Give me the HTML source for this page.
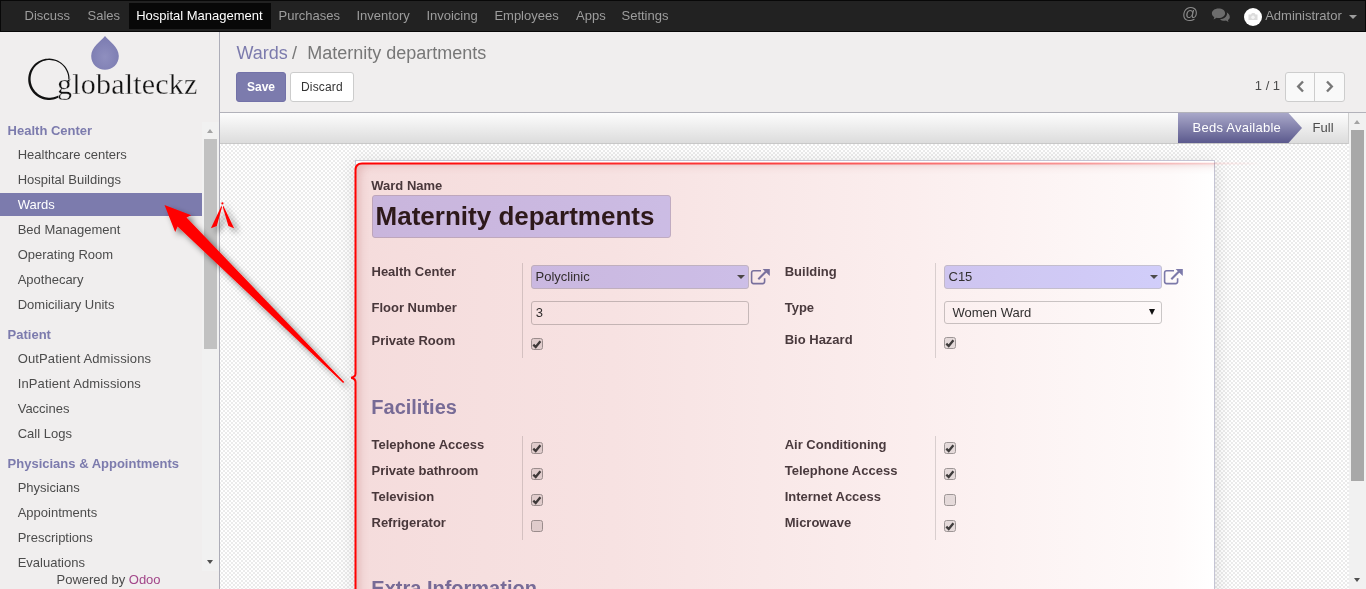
<!DOCTYPE html>
<html><head><meta charset="utf-8"><title>Odoo</title>
<style>
html,body{margin:0;padding:0;}
body{width:1366px;height:589px;overflow:hidden;position:relative;font-family:"Liberation Sans",sans-serif;background:#fff;}
.t{position:absolute;line-height:1;white-space:nowrap;}
.b{position:absolute;box-sizing:border-box;}
svg{position:absolute;overflow:visible;}
</style></head><body>

<div class="b" style="left:0px;top:0px;width:1366px;height:32px;background:#222;border:1px solid #080808;"></div>
<div class="b" style="left:129px;top:3px;width:142px;height:26px;background:#080808;"></div>
<div class="t" style="left:24.50px;top:9.00px;font-size:13px;color:#9d9d9d;">Discuss</div>
<div class="t" style="left:87.50px;top:9.00px;font-size:13px;color:#9d9d9d;">Sales</div>
<div class="t" style="left:278.50px;top:9.00px;font-size:13px;color:#9d9d9d;">Purchases</div>
<div class="t" style="left:356.40px;top:9.00px;font-size:13px;color:#9d9d9d;">Inventory</div>
<div class="t" style="left:426.40px;top:9.00px;font-size:13px;color:#9d9d9d;">Invoicing</div>
<div class="t" style="left:494.40px;top:9.00px;font-size:13px;color:#9d9d9d;">Employees</div>
<div class="t" style="left:576.00px;top:9.00px;font-size:13px;color:#9d9d9d;">Apps</div>
<div class="t" style="left:621.50px;top:9.00px;font-size:13px;color:#9d9d9d;">Settings</div>
<div class="t" style="left:136.20px;top:9.00px;font-size:13px;color:#fff;">Hospital Management</div>
<div class="t" style="left:1182.00px;top:6.46px;font-size:16px;color:#8a8a8a;">@</div>
<svg style="left:1211px;top:8px" width="20" height="14" viewBox="0 0 20 14">
<path d="M7.5 0.6C3.6 0.6 0.9 2.8 0.9 5.4c0 1.5 0.9 2.8 2.4 3.7L2.6 11.6l3.1-1.8c0.6 0.1 1.2 0.2 1.8 0.2 3.9 0 6.6-2.2 6.6-4.8S11.4 0.6 7.5 0.6z" fill="#6c6c6c"/>
<path d="M15.6 4.2c0.3 0.5 0.4 1 0.4 1.6 0 3-3.1 5.3-7 5.4 1 1 2.6 1.6 4.4 1.6 0.5 0 1-0.1 1.5-0.2l2.6 1.4-0.6-2.1c1.2-0.7 1.9-1.8 1.9-3 0-1.9-1.3-3.6-3.2-4.7z" fill="#6c6c6c"/>
</svg>
<div class="b" style="left:1244px;top:8px;width:18px;height:18px;border-radius:50%;background:#fff;"></div>
<svg style="left:1247px;top:11px" width="12" height="11" viewBox="0 0 12 11"><path d="M1.5 3.5 H4 L5 2 H7.5 L8.5 3.5 H10.5 V9 H1.5 Z" fill="#dcdcdc"/><circle cx="6" cy="6.2" r="1.7" fill="#f4f4f4"/></svg>
<div class="t" style="left:1265.20px;top:9.00px;font-size:13px;color:#9d9d9d;">Administrator</div>
<div class="b" style="left:1349px;top:15px;width:0;height:0;border-left:4px solid transparent;border-right:4px solid transparent;border-top:4px solid #9d9d9d;"></div>
<div class="b" style="left:0px;top:32px;width:220px;height:557px;background:#f0eeee;border-right:1px solid #adadb8;"></div>
<svg style="left:90px;top:35px" width="30" height="36" viewBox="0 0 30 36">
<defs><radialGradient id="dg" cx="0.5" cy="0.62" r="0.55"><stop offset="0" stop-color="#8f8fbf"/><stop offset="1" stop-color="#7d7db2"/></radialGradient></defs>
<path d="M15 1 C11 6 1.2 12 1.2 21 C1.2 29 7.5 34.8 15 34.8 C22.5 34.8 28.8 29 28.8 21 C28.8 12 19 6 15 1Z" fill="url(#dg)"/>
</svg>
<svg style="left:0;top:0" width="220" height="110" viewBox="0 0 220 110"><path d="M69.40 82.18 L69.57 80.35 L69.58 78.51 L69.43 76.67 L69.12 74.85 L68.64 73.08 L68.01 71.35 L67.23 69.68 L66.30 68.09 L65.23 66.58 L64.04 65.18 L62.72 63.89 L61.30 62.72 L59.78 61.69 L58.17 60.79 L56.49 60.04 L54.74 59.44 L52.96 59.00 L51.14 58.72 L49.30 58.60 L47.46 58.65 L45.63 58.86 L43.82 59.23 L42.06 59.76 L40.35 60.45 L38.71 61.28 L37.15 62.26 L35.68 63.37 L34.31 64.61 L33.07 65.97 L31.94 67.43 L30.96 68.98 L30.11 70.62 L29.41 72.32 L28.87 74.08 L28.48 75.88 L28.26 77.71 L28.20 79.55 L28.31 81.39 L28.57 83.21 L29.00 85.01 L29.59 86.75 L30.33 88.44 L31.21 90.05 L32.24 91.58 L33.40 93.02 L34.68 94.34 L36.07 95.54 L37.57 96.62 L39.15 97.56 L40.81 98.35 L42.54 99.00 L44.31 99.49 L46.13 99.81 L47.96 99.98 L49.80 99.98 L51.64 99.82 L53.45 99.49 L55.23 99.01 L56.95 98.37 L58.62 97.58 L58.30 95.54 L56.78 96.26 L55.21 96.85 L53.59 97.29 L51.94 97.58 L50.27 97.73 L48.59 97.73 L46.92 97.58 L45.27 97.28 L43.66 96.84 L42.08 96.25 L40.57 95.53 L39.13 94.67 L37.77 93.69 L36.50 92.60 L35.33 91.39 L34.28 90.09 L33.34 88.69 L32.54 87.22 L31.86 85.69 L31.33 84.10 L30.94 82.46 L30.70 80.80 L30.60 79.13 L30.66 77.45 L30.86 75.79 L31.21 74.15 L31.70 72.55 L32.34 70.99 L33.11 69.50 L34.01 68.09 L35.03 66.76 L36.17 65.52 L37.41 64.40 L38.75 63.38 L40.17 62.49 L41.66 61.73 L43.22 61.11 L44.83 60.63 L46.47 60.29 L48.14 60.10 L49.81 60.05 L51.49 60.16 L53.14 60.42 L54.77 60.82 L56.36 61.36 L57.89 62.05 L59.36 62.86 L60.74 63.81 L62.04 64.87 L63.24 66.04 L64.32 67.32 L65.29 68.69 L66.14 70.14 L66.85 71.66 L67.43 73.23 L67.86 74.85 L68.15 76.50 L68.29 78.18 L68.28 79.85 L68.12 81.52Z" fill="#111"/></svg>
<div class="t" style="left:57.00px;top:68.88px;font-size:30px;color:#111;font-family:'Liberation Serif',serif;letter-spacing:0.2px;-webkit-text-stroke:0.3px #f0eeee;">globalteckz</div>
<div class="b" style="left:202px;top:122px;width:17px;height:449px;background:#f1f1f1;"></div>
<div class="b" style="left:207px;top:129px;width:0;height:0;border-left:3.5px solid transparent;border-right:3.5px solid transparent;border-bottom:4px solid #a3a3a3;"></div>
<div class="b" style="left:204px;top:139px;width:13px;height:210px;background:#c1c1c1;"></div>
<div class="b" style="left:207px;top:560px;width:0;height:0;border-left:3.5px solid transparent;border-right:3.5px solid transparent;border-top:4px solid #505050;"></div>
<div class="b" style="left:0px;top:193px;width:202px;height:23px;background:#7c7bad;"></div>
<div class="t" style="left:7.60px;top:124.00px;font-size:13px;color:#7c7bad;font-weight:bold;">Health Center</div>
<div class="t" style="left:17.70px;top:148.00px;font-size:13px;color:#4c4c4c;">Healthcare centers</div>
<div class="t" style="left:17.70px;top:173.00px;font-size:13px;color:#4c4c4c;">Hospital Buildings</div>
<div class="t" style="left:17.70px;top:198.00px;font-size:13px;color:#fff;">Wards</div>
<div class="t" style="left:17.70px;top:223.00px;font-size:13px;color:#4c4c4c;">Bed Management</div>
<div class="t" style="left:17.70px;top:248.00px;font-size:13px;color:#4c4c4c;">Operating Room</div>
<div class="t" style="left:17.70px;top:273.00px;font-size:13px;color:#4c4c4c;">Apothecary</div>
<div class="t" style="left:17.70px;top:298.00px;font-size:13px;color:#4c4c4c;">Domiciliary Units</div>
<div class="t" style="left:7.60px;top:328.20px;font-size:13px;color:#7c7bad;font-weight:bold;">Patient</div>
<div class="t" style="left:17.70px;top:352.20px;font-size:13px;color:#4c4c4c;letter-spacing:0.13px;">OutPatient Admissions</div>
<div class="t" style="left:17.70px;top:377.20px;font-size:13px;color:#4c4c4c;letter-spacing:0.13px;">InPatient Admissions</div>
<div class="t" style="left:17.70px;top:402.20px;font-size:13px;color:#4c4c4c;">Vaccines</div>
<div class="t" style="left:17.70px;top:427.20px;font-size:13px;color:#4c4c4c;">Call Logs</div>
<div class="t" style="left:7.60px;top:457.40px;font-size:13px;color:#7c7bad;font-weight:bold;">Physicians &amp; Appointments</div>
<div class="t" style="left:17.70px;top:481.40px;font-size:13px;color:#4c4c4c;">Physicians</div>
<div class="t" style="left:17.70px;top:506.40px;font-size:13px;color:#4c4c4c;">Appointments</div>
<div class="t" style="left:17.70px;top:531.40px;font-size:13px;color:#4c4c4c;">Prescriptions</div>
<div class="t" style="left:17.70px;top:556.40px;font-size:13px;color:#4c4c4c;">Evaluations</div>
<div class="b" style="left:0px;top:571px;width:219px;height:18px;background:#f0eeee;"></div>
<div class="t" style="left:56.50px;top:573.00px;font-size:13px;color:#4c4c4c;">Powered by <span style="color:#a24689">Odoo</span></div>
<div class="b" style="left:220px;top:32px;width:1146px;height:81px;background:#f0eeee;border-bottom:1px solid #b2b2ba;"></div>
<div class="t" style="left:236.50px;top:44.46px;font-size:18px;color:#7c7bad;">Wards</div>
<div class="t" style="left:292.00px;top:44.46px;font-size:18px;color:#777;">/</div>
<div class="t" style="left:307.30px;top:44.46px;font-size:18px;color:#777;">Maternity departments</div>
<div class="b" style="left:236px;top:72px;width:50px;height:30px;background:#7c7bad;border:1px solid #7372a8;border-radius:3px;"></div>
<div class="t" style="left:247.00px;top:80.84px;font-size:12px;color:#fff;font-weight:bold;">Save</div>
<div class="b" style="left:290px;top:72px;width:64px;height:30px;background:#fff;border:1px solid #ccc;border-radius:3px;"></div>
<div class="t" style="left:301.00px;top:80.84px;font-size:12px;color:#333;letter-spacing:0.15px;">Discard</div>
<div class="t" style="left:1254.80px;top:79.30px;font-size:13px;color:#4c4c4c;">1 / 1</div>
<div class="b" style="left:1285px;top:72px;width:60px;height:30px;background:#f9f9f9;border:1px solid #cdcdcd;border-radius:3px;"></div>
<div class="b" style="left:1314px;top:72px;width:1px;height:30px;background:#cdcdcd;"></div>
<svg style="left:1296px;top:80px" width="9" height="13" viewBox="0 0 9 13"><path d="M7 1.5 L2.2 6.5 L7 11.5" fill="none" stroke="#777" stroke-width="2.4"/></svg>
<svg style="left:1325px;top:80px" width="9" height="13" viewBox="0 0 9 13"><path d="M2 1.5 L6.8 6.5 L2 11.5" fill="none" stroke="#777" stroke-width="2.4"/></svg>
<div class="b" style="left:220px;top:113px;width:1129px;height:31px;background:linear-gradient(#fdfdfd,#dcdcdc);border-bottom:1px solid #c8c8c8;border-right:1px solid #d0d0d0;"></div>
<svg style="left:1178px;top:113px" width="125" height="30" viewBox="0 0 125 30">
<defs><linearGradient id="sg" x1="0" y1="0" x2="0" y2="1"><stop offset="0" stop-color="#a9a8c9"/><stop offset="1" stop-color="#5b598d"/></linearGradient></defs>
<path d="M0 0 H110.5 L124 15 L110.5 30 H0 Z" fill="url(#sg)"/>
</svg>
<div class="t" style="left:1192.50px;top:121.20px;font-size:13px;color:#fff;letter-spacing:0.25px;">Beds Available</div>
<div class="t" style="left:1312.60px;top:121.20px;font-size:13px;color:#4c4c4c;">Full</div>
<div class="b" style="left:220px;top:144px;width:1129px;height:445px;background-color:#fff;background-image:conic-gradient(#ebebeb 25%,transparent 0 50%,#ebebeb 0 75%,transparent 0);background-size:4px 4px;background-position:-1px 0;"></div>
<div class="b" style="left:1349px;top:113px;width:17px;height:476px;background:#f1f1f1;"></div>
<div class="b" style="left:1354px;top:120px;width:0;height:0;border-left:3.5px solid transparent;border-right:3.5px solid transparent;border-bottom:4px solid #a3a3a3;"></div>
<div class="b" style="left:1351px;top:130px;width:13px;height:351px;background:#a8a8a8;"></div>
<div class="b" style="left:1354px;top:578px;width:0;height:0;border-left:3.5px solid transparent;border-right:3.5px solid transparent;border-top:4px solid #505050;"></div>
<div class="b" style="left:355px;top:160px;width:860px;height:460px;background:#fff;border:1px solid #c4c4d4;box-shadow:0 4px 18px rgba(0,0,0,0.12);"></div>
<div class="t" style="left:371.30px;top:179.00px;font-size:13px;color:#4b3f43;font-weight:bold;">Ward Name</div>
<div class="b" style="left:372px;top:195px;width:299px;height:43px;background:#d2d2ff;border:1px solid #c6c0d8;border-radius:3px;"></div>
<div class="t" style="left:375.60px;top:202.99px;font-size:26px;color:#2f1c1e;font-weight:bold;">Maternity departments</div>
<div class="t" style="left:371.50px;top:265.30px;font-size:13px;color:#4b3f43;font-weight:bold;">Health Center</div>
<div class="t" style="left:371.50px;top:301.00px;font-size:13px;color:#4b3f43;font-weight:bold;">Floor Number</div>
<div class="t" style="left:371.50px;top:334.00px;font-size:13px;color:#4b3f43;font-weight:bold;">Private Room</div>
<div class="b" style="left:522px;top:263px;width:1px;height:95px;background:#dcdcdc;"></div>
<div class="b" style="left:531px;top:265px;width:218px;height:24px;background:#d2d2ff;border:1px solid #c6c6d6;border-radius:3px;"></div>
<div class="t" style="left:535.50px;top:270.20px;font-size:13px;color:#333;">Polyclinic</div>
<div class="b" style="left:737px;top:275px;width:0;height:0;border-left:4px solid transparent;border-right:4px solid transparent;border-top:4px solid #4c4c4c;"></div>
<div class="b" style="left:531px;top:301px;width:218px;height:24px;background:#fff;border:1px solid #cbcbcb;border-radius:3px;"></div>
<div class="t" style="left:535.80px;top:306.30px;font-size:13px;color:#333;">3</div>
<div class="t" style="left:784.70px;top:265.30px;font-size:13px;color:#4b3f43;font-weight:bold;">Building</div>
<div class="t" style="left:784.70px;top:301.00px;font-size:13px;color:#4b3f43;font-weight:bold;">Type</div>
<div class="t" style="left:784.70px;top:333.30px;font-size:13px;color:#4b3f43;font-weight:bold;">Bio Hazard</div>
<div class="b" style="left:935px;top:263px;width:1px;height:95px;background:#dcdcdc;"></div>
<div class="b" style="left:944px;top:265px;width:218px;height:24px;background:#d2d2ff;border:1px solid #c6c6d6;border-radius:3px;"></div>
<div class="t" style="left:948.50px;top:269.80px;font-size:13px;color:#333;">C15</div>
<div class="b" style="left:1150px;top:275px;width:0;height:0;border-left:4px solid transparent;border-right:4px solid transparent;border-top:4px solid #4c4c4c;"></div>
<div class="b" style="left:944px;top:301px;width:218px;height:23px;background:#fff;border:1px solid #cbcbcb;border-radius:3px;"></div>
<div class="t" style="left:952.50px;top:306.00px;font-size:13px;color:#333;">Women Ward</div>
<div class="b" style="left:1148.5px;top:309px;width:0;height:0;border-left:3.5px solid transparent;border-right:3.5px solid transparent;border-top:6px solid #111;"></div>
<svg style="left:750px;top:268px" width="21" height="18" viewBox="0 0 21 18">
<path d="M11 2.8 H3.6 Q1.6 2.8 1.6 4.8 V13.6 Q1.6 15.6 3.6 15.6 H12.6 Q14.6 15.6 14.6 13.6 V10.2" fill="none" stroke="#7c7bad" stroke-width="1.6"/>
<path d="M8.3 11.2 L16 3.5" fill="none" stroke="#7c7bad" stroke-width="2.1"/>
<path d="M12.6 0.9 H19.8 V8.1 Z" fill="#7c7bad"/>
</svg>
<svg style="left:1163px;top:268px" width="21" height="18" viewBox="0 0 21 18">
<path d="M11 2.8 H3.6 Q1.6 2.8 1.6 4.8 V13.6 Q1.6 15.6 3.6 15.6 H12.6 Q14.6 15.6 14.6 13.6 V10.2" fill="none" stroke="#7c7bad" stroke-width="1.6"/>
<path d="M8.3 11.2 L16 3.5" fill="none" stroke="#7c7bad" stroke-width="2.1"/>
<path d="M12.6 0.9 H19.8 V8.1 Z" fill="#7c7bad"/>
</svg>
<svg style="left:531px;top:338px" width="12" height="12" viewBox="0 0 12 12">
<rect x="0.5" y="0.5" width="11" height="11" rx="2" fill="#e8e8e8" stroke="#a0a0a0"/>
<path d="M2.3 6.6 L4.7 9 L9.4 3.2" fill="none" stroke="#404040" stroke-width="2.3"/>
</svg>
<svg style="left:944px;top:337px" width="12" height="12" viewBox="0 0 12 12">
<rect x="0.5" y="0.5" width="11" height="11" rx="2" fill="#e8e8e8" stroke="#a0a0a0"/>
<path d="M2.3 6.6 L4.7 9 L9.4 3.2" fill="none" stroke="#404040" stroke-width="2.3"/>
</svg>
<div class="t" style="left:371.30px;top:397.27px;font-size:20px;color:#7c7bad;font-weight:bold;">Facilities</div>
<div class="t" style="left:371.50px;top:438.20px;font-size:13px;color:#4b3f43;font-weight:bold;">Telephone Access</div>
<svg style="left:531px;top:442px" width="12" height="12" viewBox="0 0 12 12">
<rect x="0.5" y="0.5" width="11" height="11" rx="2" fill="#e8e8e8" stroke="#a0a0a0"/>
<path d="M2.3 6.6 L4.7 9 L9.4 3.2" fill="none" stroke="#404040" stroke-width="2.3"/>
</svg>
<div class="t" style="left:371.50px;top:464.20px;font-size:13px;color:#4b3f43;font-weight:bold;">Private bathroom</div>
<svg style="left:531px;top:468px" width="12" height="12" viewBox="0 0 12 12">
<rect x="0.5" y="0.5" width="11" height="11" rx="2" fill="#e8e8e8" stroke="#a0a0a0"/>
<path d="M2.3 6.6 L4.7 9 L9.4 3.2" fill="none" stroke="#404040" stroke-width="2.3"/>
</svg>
<div class="t" style="left:371.50px;top:490.20px;font-size:13px;color:#4b3f43;font-weight:bold;">Television</div>
<svg style="left:531px;top:494px" width="12" height="12" viewBox="0 0 12 12">
<rect x="0.5" y="0.5" width="11" height="11" rx="2" fill="#e8e8e8" stroke="#a0a0a0"/>
<path d="M2.3 6.6 L4.7 9 L9.4 3.2" fill="none" stroke="#404040" stroke-width="2.3"/>
</svg>
<div class="t" style="left:371.50px;top:516.20px;font-size:13px;color:#4b3f43;font-weight:bold;">Refrigerator</div>
<svg style="left:531px;top:520px" width="12" height="12" viewBox="0 0 12 12">
<rect x="0.5" y="0.5" width="11" height="11" rx="2" fill="#e8e8e8" stroke="#a0a0a0"/>

</svg>
<div class="b" style="left:522px;top:436px;width:1px;height:104px;background:#dcdcdc;"></div>
<div class="t" style="left:784.70px;top:438.20px;font-size:13px;color:#4b3f43;font-weight:bold;">Air Conditioning</div>
<svg style="left:944px;top:442px" width="12" height="12" viewBox="0 0 12 12">
<rect x="0.5" y="0.5" width="11" height="11" rx="2" fill="#e8e8e8" stroke="#a0a0a0"/>
<path d="M2.3 6.6 L4.7 9 L9.4 3.2" fill="none" stroke="#404040" stroke-width="2.3"/>
</svg>
<div class="t" style="left:784.70px;top:464.20px;font-size:13px;color:#4b3f43;font-weight:bold;">Telephone Access</div>
<svg style="left:944px;top:468px" width="12" height="12" viewBox="0 0 12 12">
<rect x="0.5" y="0.5" width="11" height="11" rx="2" fill="#e8e8e8" stroke="#a0a0a0"/>
<path d="M2.3 6.6 L4.7 9 L9.4 3.2" fill="none" stroke="#404040" stroke-width="2.3"/>
</svg>
<div class="t" style="left:784.70px;top:490.20px;font-size:13px;color:#4b3f43;font-weight:bold;">Internet Access</div>
<svg style="left:944px;top:494px" width="12" height="12" viewBox="0 0 12 12">
<rect x="0.5" y="0.5" width="11" height="11" rx="2" fill="#e8e8e8" stroke="#a0a0a0"/>

</svg>
<div class="t" style="left:784.70px;top:516.20px;font-size:13px;color:#4b3f43;font-weight:bold;">Microwave</div>
<svg style="left:944px;top:520px" width="12" height="12" viewBox="0 0 12 12">
<rect x="0.5" y="0.5" width="11" height="11" rx="2" fill="#e8e8e8" stroke="#a0a0a0"/>
<path d="M2.3 6.6 L4.7 9 L9.4 3.2" fill="none" stroke="#404040" stroke-width="2.3"/>
</svg>
<div class="b" style="left:935px;top:436px;width:1px;height:104px;background:#dcdcdc;"></div>
<div class="t" style="left:371.30px;top:578.47px;font-size:20px;color:#7c7bad;font-weight:bold;">Extra Information</div>
<div class="b" style="left:356px;top:163px;width:859px;height:440px;border-top-left-radius:5px;mix-blend-mode:multiply;background:linear-gradient(90deg,#f5dcdc 0,#f7e2e2 30%,#fbeeee 65%,#fefafa 95%,#fff 100%);box-shadow:inset 9px 7px 8px -5px rgba(170,70,70,0.22);"></div>
<svg style="left:0;top:0" width="1366" height="589" viewBox="0 0 1366 589">
<defs><linearGradient id="rg" gradientUnits="userSpaceOnUse" x1="354" y1="0" x2="1262" y2="0">
<stop offset="0" stop-color="#ff0000" stop-opacity="1"/><stop offset="0.45" stop-color="#ff1a1a" stop-opacity="0.8"/><stop offset="0.8" stop-color="#ff4040" stop-opacity="0.45"/><stop offset="0.95" stop-color="#ff6060" stop-opacity="0.15"/><stop offset="1" stop-color="#ff6060" stop-opacity="0"/></linearGradient></defs>
<path d="M355.5 600 V382 Q355.5 378.6 351.2 377.7 Q355.5 376.8 355.5 373.4 V170 Q355.5 163.4 362 163.4 H1262" fill="none" stroke="url(#rg)" stroke-width="2"/>
</svg>
<svg style="left:0;top:0" width="1366" height="589" viewBox="0 0 1366 589">
<defs><filter id="sh" x="-20%" y="-20%" width="140%" height="140%"><feGaussianBlur in="SourceAlpha" stdDeviation="3"/><feOffset dx="4" dy="4"/><feComponentTransfer><feFuncA type="linear" slope="0.5"/></feComponentTransfer><feMerge><feMergeNode/><feMergeNode in="SourceGraphic"/></feMerge></filter></defs>
<g filter="url(#sh)" fill="#ff0000">
<path d="M164.5 205.1 L191.3 215.2 L186.5 217.6 L344.2 382 L343.1 382.9 L177.6 226.5 L175.2 231.9 Z"/>
<path d="M221.6 205.6 L210.9 228.3 L216.8 225.9 L221.9 207.4 Z"/><path d="M223.2 205.6 L234.1 228.3 L228.4 225.9 L222.9 207.4 Z"/><circle cx="222.4" cy="203.4" r="1.1"/>
</g>
</svg>
</body></html>
